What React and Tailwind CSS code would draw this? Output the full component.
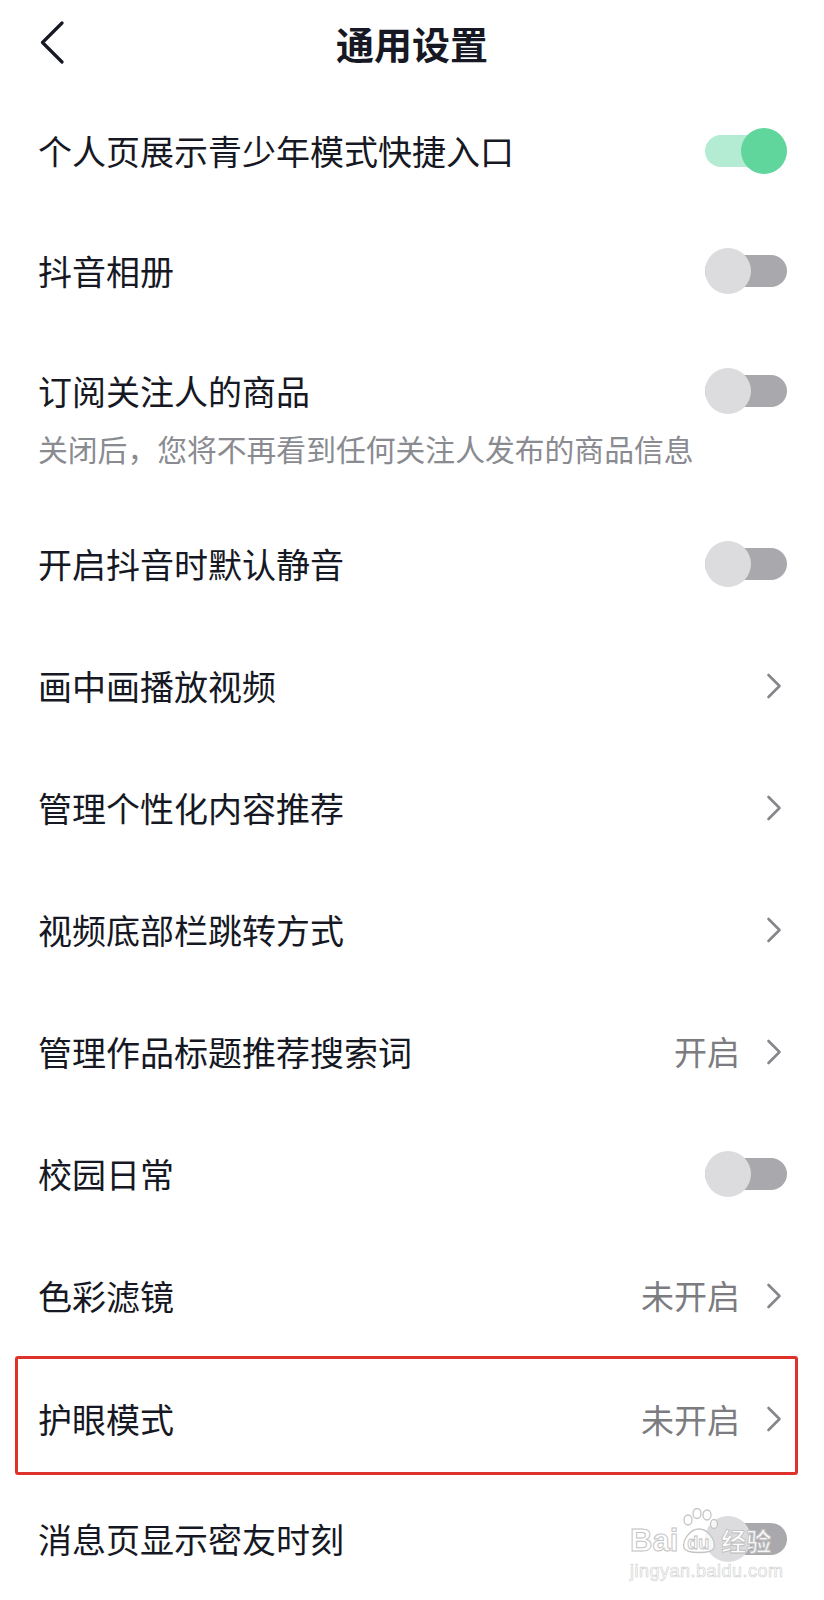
import React from 'react';

const rows = [
  { label: '个人页展示青少年模式快捷入口', type: 'toggle', on: true },
  { label: '抖音相册', type: 'toggle' },
  { label: '订阅关注人的商品', type: 'toggle', sub: '关闭后，您将不再看到任何关注人发布的商品信息' },
  { label: '开启抖音时默认静音', type: 'toggle' },
  { label: '画中画播放视频', type: 'link' },
  { label: '管理个性化内容推荐', type: 'link' },
  { label: '视频底部栏跳转方式', type: 'link' },
  { label: '管理作品标题推荐搜索词', type: 'link', value: '开启' },
  { label: '校园日常', type: 'toggle' },
  { label: '色彩滤镜', type: 'link', value: '未开启' },
  { label: '护眼模式', type: 'link', value: '未开启', marked: true },
  { label: '消息页显示密友时刻', type: 'toggle' },
];

const Toggle = ({ on }) => (
  <div className="relative w-[82px] h-[46px] shrink-0">
    <div className={`absolute inset-x-0 top-[7px] h-[32px] rounded-full ${on ? 'bg-[#b3ecd3]' : 'bg-[#a9a9ad]'}`} />
    <div className={`absolute top-0 w-[46px] h-[46px] rounded-full ${on ? 'right-0 bg-[#60d69c]' : 'left-0 bg-[#dcdcdf]'}`} />
  </div>
);

const Chevron = () => (
  <svg width="16" height="26" viewBox="0 0 16 26" fill="none" className="shrink-0">
    <path d="M2.5 2 L13.5 13 L2.5 24" stroke="#86868b" strokeWidth="2.6" strokeLinecap="round" strokeLinejoin="round" />
  </svg>
);

const RightSide = ({ row }) => {
  if (row.type === 'toggle') return <Toggle on={row.on} />;
  return (
    <div className="flex items-center gap-[26px]">
      {row.value && <span className="text-[33px] leading-none text-[#7c7c80]">{row.value}</span>}
      <Chevron />
    </div>
  );
};

const Row = ({ row }) => {
  if (row.sub) {
    return (
      <div className="pl-[38px] pr-[37px] pt-[37px] pb-[39px]">
        <div className="flex items-center justify-between h-[46px]">
          <span className="text-[34px] leading-none text-[#161823]">{row.label}</span>
          <RightSide row={row} />
        </div>
        <div className="mt-[20px] text-[29.8px] leading-none text-[#8a8b91]">{row.sub}</div>
      </div>
    );
  }
  if (row.marked) {
    return (
      <div className="h-[122px] -mt-[1px]">
        <div className="ml-[15px] mr-[26px] h-[119px] border-[3px] border-[#e0322c] rounded-[3px] flex items-center justify-between pl-[20px] pr-[13px] pt-[8px]">
          <span className="text-[34px] leading-none text-[#161823]">{row.label}</span>
          <RightSide row={row} />
        </div>
      </div>
    );
  }
  const tall = rows.indexOf(row) > 2;
  return (
    <div className={`flex items-center justify-between pl-[38px] ${row.type === 'toggle' ? 'pr-[37px]' : 'pr-[42px]'} ${tall ? 'h-[122px]' : 'h-[120px]'}`}>
      <span className="text-[34px] leading-none text-[#161823]">{row.label}</span>
      <RightSide row={row} />
    </div>
  );
};

// baidu jingyan watermark in the bottom corner
const Watermark = () => (
  <div className="absolute left-[630px] top-[1506px] w-[165px] pointer-events-none font-['Liberation_Sans',sans-serif]">
    <div className="flex items-end h-[48px]">
      <span className="text-[31px] font-bold leading-none text-white/80 [-webkit-text-stroke:1px_#c4c4c4] mb-[-2px]">Bai</span>
      <div className="relative w-[40px] h-[46px] ml-[1px]">
        <svg width="40" height="46" viewBox="0 0 40 46" fill="none" className="absolute inset-0">
          <ellipse cx="9" cy="12" rx="4" ry="5" stroke="#c4c4c4" strokeWidth="1.3" fill="rgba(255,255,255,0.75)" />
          <ellipse cx="18" cy="5.5" rx="4" ry="5" stroke="#c4c4c4" strokeWidth="1.3" fill="rgba(255,255,255,0.75)" />
          <ellipse cx="28" cy="7" rx="4" ry="5" stroke="#c4c4c4" strokeWidth="1.3" fill="rgba(255,255,255,0.75)" />
          <ellipse cx="35" cy="16" rx="3.5" ry="4.5" stroke="#c4c4c4" strokeWidth="1.3" fill="rgba(255,255,255,0.75)" />
          <path d="M5 40 C3 31 12 21 20 21 C28 21 37 31 35 40 C33 46 7 46 5 40 Z" stroke="#c4c4c4" strokeWidth="1.3" fill="rgba(255,255,255,0.75)" />
        </svg>
        <span className="absolute left-[8px] top-[26px] text-[18px] font-bold leading-none text-white/80 [-webkit-text-stroke:0.8px_#bdbdbd]">du</span>
      </div>
      <span className="ml-[2px] text-[25px] font-bold leading-none text-white/90 [-webkit-text-stroke:0.8px_#bdbdbd] font-['Noto_Sans_CJK_SC',sans-serif] mb-[1px]">经验</span>
    </div>
    <div className="mt-[8px] text-[18px] leading-none text-white/80 [-webkit-text-stroke:0.6px_#cfcfcf] tracking-[0.5px]">jingyan.baidu.com</div>
  </div>
);

export default function App() {
  return (
    <div className="relative w-[824px] h-[1600px] overflow-hidden bg-white font-['Noto_Sans_CJK_SC','Noto_Sans',sans-serif]">
      <div className="grid grid-cols-[1fr_auto_1fr] items-center h-[91px] pb-[6px] pl-[40px] pr-[40px]">
        <svg width="24" height="43" viewBox="0 0 24 43" fill="none">
          <path d="M22 2 L2.5 21.5 L22 41" stroke="#161823" strokeWidth="3.2" strokeLinecap="round" strokeLinejoin="round" />
        </svg>
        <h1 className="text-[38px] font-bold leading-none text-[#161823]">通用设置</h1>
        <div />
      </div>
      {rows.map((row, i) => (
        <Row key={i} row={row} />
      ))}
      <Watermark />
    </div>
  );
}
